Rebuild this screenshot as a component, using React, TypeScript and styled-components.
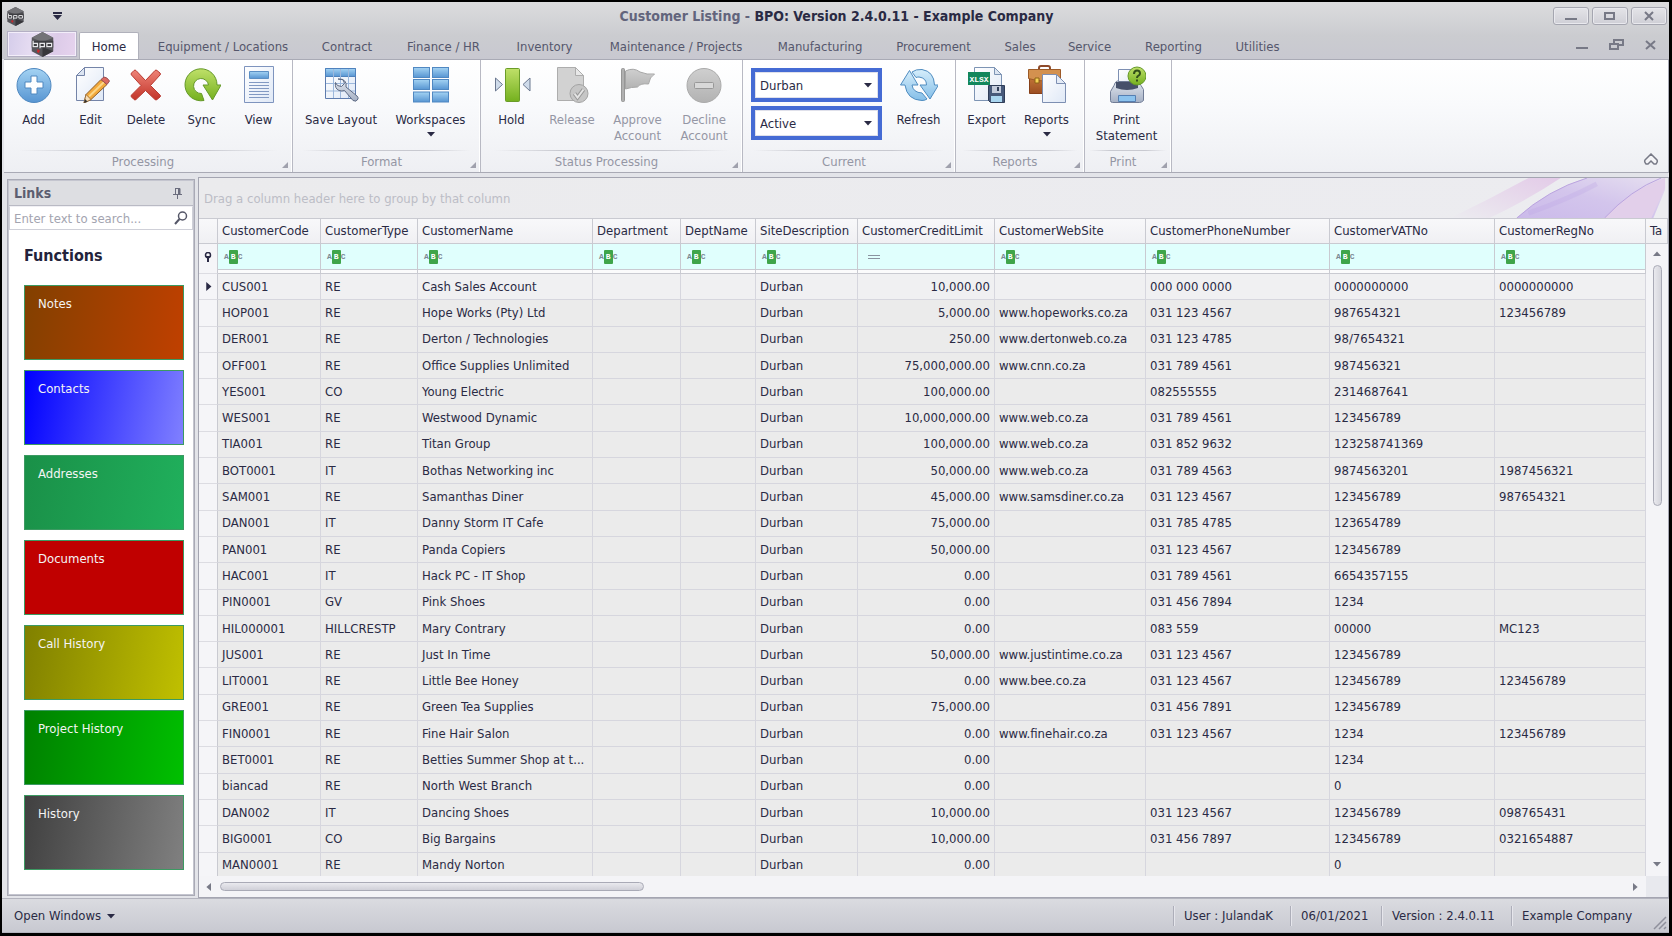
import React from 'react';
import styled, { createGlobalStyle } from 'styled-components';

const ink = '#2a2a44';
const muted = '#9496a4';
const line = '#c9cad1';

const GlobalStyle = createGlobalStyle`
  * { box-sizing: border-box; }
  html, body { margin: 0; height: 100%; }
  #root { height: 100%; }
  body, button, input, select {
    font-family: 'DejaVu Sans Condensed', 'DejaVu Sans', Tahoma, sans-serif;
    font-size: 13px;
    color: ${ink};
  }
  button { border: 0; padding: 0; background: none; }
`;

/* ---------- frame ---------- */

const Window = styled.div`
  display: flex;
  flex-direction: column;
  height: 100vh;
  min-height: 600px;
  border: 2px solid #000;
  border-right-width: 3px;
  border-bottom-width: 3px;
  background: #e3e4e9;
  overflow: hidden;
`;

const Chrome = styled.header`
  flex: none;
  background: linear-gradient(#dcdcde, #cbccd0 60%, #c8c8d0);
`;

const TitleBar = styled.div`
  display: grid;
  grid-template-columns: 120px 1fr 120px;
  align-items: center;
  height: 28px;
  padding: 0 2px 0 4px;
`;

const QuickAccess = styled.div`
  display: flex;
  align-items: center;
  gap: 28px;
  height: 28px;
`;

const Title = styled.h1`
  margin: 0;
  text-align: center;
  font-size: 14px;
  line-height: 26px;
  font-weight: bold;
  white-space: nowrap;
  span { color: #62647c; }
`;

const WindowButtons = styled.div`
  display: flex;
  justify-content: flex-end;
  gap: 3px;
`;

const WindowButton = styled.button`
  display: flex;
  align-items: center;
  justify-content: center;
  width: 36px;
  height: 18px;
  border: 1px solid #a5a6b0;
  border-radius: 3px;
  background: linear-gradient(#e4e4e8, #cfcfd6);
  box-shadow: inset 0 0 0 1px #e9e9ee;
`;

const TabRow = styled.nav`
  display: flex;
  align-items: flex-end;
  height: 29px;
  padding: 0 12px 0 6px;
`;

const AppButton = styled.button`
  display: flex;
  align-items: center;
  justify-content: center;
  width: 68px;
  height: 24px;
  margin: 0 3px 3px 0;
  border: 1px solid #f3eefa;
  background: linear-gradient(100deg, #d5cdea, #e6dcf2 35%, #dccbe8 70%, #e6d3ee);
  box-shadow: 0 0 0 1px #b4b0c4;
`;

const Tab = styled.button<{ $width: number; $active?: boolean }>`
  flex: none;
  width: ${p => p.$width}px;
  height: 27px;
  margin-right: ${p => (p.$active ? 2 : 0)}px;
  padding-top: 2px;
  line-height: 24px;
  white-space: nowrap;
  color: ${p => (p.$active ? ink : '#55576c')};
  background: ${p => (p.$active ? '#fff' : 'transparent')};
  border: solid #b0b1bb;
  border-width: ${p => (p.$active ? '1px 1px 0' : '0')};
  border-radius: 2px 2px 0 0;
`;

const ChildButtons = styled.div`
  display: flex;
  gap: 21px;
  margin-left: auto;
  height: 29px;
  align-items: center;
  button { display: flex; }
`;

/* ---------- ribbon ---------- */

const Ribbon = styled.section`
  display: flex;
  flex: none;
  height: 114px;
  margin: 0 0 0 2px;
  border: 1px solid #a9aab5;
  border-width: 1px 1px 1px 0;
  background: linear-gradient(#fff, #f9fafc 40%, #eeeff3);
`;

const Group = styled.section<{ $width: number }>`
  display: flex;
  flex-direction: column;
  flex: none;
  width: ${p => p.$width}px;
  border-right: 1px solid #b8b9c3;
  box-shadow: inset -1px 0 #fff;
`;

const GroupItems = styled.div`
  display: flex;
  flex: 1;
`;

const GroupCaption = styled.h2`
  display: flex;
  align-items: center;
  justify-content: center;
  height: 22px;
  margin: 0;
  font-size: 13px;
  font-weight: normal;
  color: ${muted};
  background: linear-gradient(90deg, transparent 5%, #c8c9d0 30%, #c8c9d0 70%, transparent 95%) top / 100% 1px no-repeat;
  span { flex: 1; text-align: center; }
  svg { align-self: flex-end; margin: 0 4px 4px 0; }
`;

const BigButton = styled.button<{ $width: number }>`
  display: flex;
  flex-direction: column;
  align-items: center;
  width: ${p => p.$width}px;
  padding: 5px 0 0 1px;
  line-height: 16px;
  white-space: nowrap;
  &:disabled { color: ${muted}; }
  > svg:first-child { margin-bottom: 9px; }
  > svg:last-child { margin-top: 2px; }
`;

const Pickers = styled.div`
  display: flex;
  flex-direction: column;
  gap: 4px;
  padding: 8px 0 0 8px;
`;

const Picker = styled.label`
  display: flex;
  align-items: center;
  width: 131px;
  height: 34px;
  padding-right: 6px;
  border: 4px solid #456bd4;
  background: #fff;
  box-shadow: inset 0 0 0 1px #dfe0ea;
  select {
    flex: 1;
    padding: 0 0 0 5px;
    border: 0;
    appearance: none;
    background: transparent;
  }
`;

const CollapseButton = styled.button`
  display: flex;
  align-self: flex-end;
  margin: 0 9px 6px auto;
`;

/* ---------- side panel ---------- */

const Workspace = styled.main`
  display: flex;
  flex: 1;
  min-height: 0;
  gap: 3px;
  padding: 4px 0 0 5px;
`;

const LinksPanel = styled.aside`
  flex: none;
  width: 188px;
  margin: 2px 0 2px;
  padding: 1px;
  border: 1px solid #a9aab5;
  outline: 1px solid #c4c5cf;
  outline-offset: -2px;
  background: #fff;
`;

const PanelHeader = styled.div`
  display: flex;
  align-items: center;
  justify-content: space-between;
  height: 25px;
  padding: 0 11px 0 5px;
  background: #dddee2;
  border-bottom: 1px solid #b9bac4;
  h2 { margin: 0; font-size: 14px; line-height: 22px; color: #5c5e70; }
`;

const Search = styled.label`
  display: flex;
  align-items: center;
  height: 24px;
  padding: 0 4px;
  border: 1px solid #cfd0d8;
  border-top-color: #f0f0f4;
  input {
    flex: 1;
    min-width: 0;
    padding: 0;
    border: 0;
    outline: 0;
    background: none;
  }
  input::placeholder { color: #a3a4b0; opacity: 1; }
`;

const FunctionsTitle = styled.h3`
  margin: 14px 0 17px 15px;
  font-size: 16px;
  line-height: 24px;
  color: #23233b;
`;

const Tiles = styled.div`
  display: flex;
  flex-direction: column;
  gap: 10px;
  padding: 0 9px 0 15px;
`;

const Tile = styled.button<{ $from: string; $to: string }>`
  height: 75px;
  padding: 10px 13px;
  display: flex;
  align-items: flex-start;
  color: #f4f4f4;
  line-height: 16px;
  border: 1px solid #3c9a62;
  background: linear-gradient(100deg, ${p => p.$from}, ${p => p.$to});
`;

/* ---------- grid ---------- */

const GridPanel = styled.section`
  display: flex;
  flex-direction: column;
  flex: 1;
  min-width: 0;
  border: 1px solid #a4a5b1;
  background: #f4f4f7;
`;

const GroupBar = styled.div`
  display: flex;
  flex: none;
  align-items: center;
  justify-content: space-between;
  height: 40px;
  padding-left: 5px;
  color: #bcbdc6;
  background: linear-gradient(90deg, #ebebed, #ececf0);
`;

const TableArea = styled.div`
  position: relative;
  flex: 1;
  min-height: 0;
  overflow: hidden;
`;

const Table = styled.table`
  width: 100%;
  height: calc(100% + 3px);
  table-layout: fixed;
  border-collapse: separate;
  border-spacing: 0;
  white-space: nowrap;
`;

const HeadCell = styled.th`
  height: 26px;
  padding: 0 0 2px 4px;
  text-align: left;
  font-weight: normal;
  overflow: hidden;
  border: solid ${line};
  border-width: 1px 1px 1px 0;
  background: linear-gradient(#f8f8fa, #f0f0f3);
`;

const FilterCell = styled.td`
  height: 30px;
  padding: 0;
  border-right: 1px solid ${line};
  border-bottom: 1px solid ${line};
  background: linear-gradient(#e0fffd 25px, ${line} 25px, ${line} 26px, #fbfbfc 26px);
`;

const FilterBox = styled.label`
  display: flex;
  align-items: center;
  height: 25px;
  margin-bottom: 4px;
  padding-left: 6px;
  input {
    flex: 1;
    min-width: 0;
    padding: 0 4px;
    border: 0;
    outline: 0;
    background: none;
  }
`;

const Abc = styled.span`
  display: flex;
  align-items: center;
  font: bold 8px/14px 'Liberation Mono', monospace;
  color: #7b8894;
  b { padding: 0 2px; color: #fff; background: #3fa54a; border-radius: 1px; }
`;

const IndicatorCell = styled.td<{ $filter?: boolean }>`
  padding: 0 0 ${p => (p.$filter ? 4 : 0)}px 0;
  border-right: 1px solid ${line};
  border-bottom: 1px solid #dcdce2;
  background: #f5f5f8;
  svg { display: block; margin: 0 auto; }
`;

const Cell = styled.td<{ $right?: boolean }>`
  padding: 0 4px;
  overflow: hidden;
  text-overflow: ellipsis;
  text-align: ${p => (p.$right ? 'right' : 'left')};
  line-height: 24px;
  border: solid #d6d6de;
  border-width: 0 1px 1px 0;
  background: #ebebeb;
  tr:first-child > & { background: #f0f0f2; }
`;

const VScroll = styled.div`
  position: absolute;
  top: 26px;
  right: 0;
  bottom: 0;
  width: 22px;
  display: flex;
  flex-direction: column;
  align-items: center;
  justify-content: space-between;
  padding: 6px 0 8px;
  background: #f4f4f7;
`;

const HScroll = styled.div`
  display: flex;
  flex: none;
  align-items: center;
  height: 21px;
  padding-left: 6px;
  background: #f4f4f7;
`;

const Thumb = styled.div<{ $vertical?: boolean }>`
  width: ${p => (p.$vertical ? '9px' : '29%')};
  height: ${p => (p.$vertical ? '39%' : '9px')};
  margin: ${p => (p.$vertical ? '7px 0 auto' : '0 auto 0 7px')};
  border: 1px solid #a9aab6;
  border-radius: 5px;
  background: ${p => (p.$vertical ? 'linear-gradient(90deg, #e9e9ee, #d5d5dc)' : 'linear-gradient(#e9e9ee, #d0d0d8)')};
`;

const Corner = styled.span`
  width: 22px;
  height: 21px;
  margin-left: 7px;
  background: #e8e9ee;
`;

/* ---------- status bar ---------- */

const StatusBar = styled.footer`
  display: flex;
  flex: none;
  align-items: center;
  height: 35px;
  padding-left: 12px;
  border: 1px solid #b3b4be;
  border-width: 1px 0;
  background: linear-gradient(#dadbe0, #c8c9d1);
`;

const OpenWindows = styled.button`
  display: flex;
  align-items: center;
  gap: 6px;
  margin-right: auto;
`;

const StatusItem = styled.span<{ $width: number }>`
  width: ${p => p.$width}px;
  padding-left: 10px;
  line-height: 20px;
  white-space: nowrap;
  border-left: 1px solid #adaeb9;
  box-shadow: inset 1px 0 #e6e6ec;
`;

/* ---------- icons ---------- */

const Arrow = ({ dir = 'down', size = 8, color = ink }: { dir?: string; size?: number; color?: string }) => {
  const turn: Record<string, number> = { down: 0, left: 90, up: 180, right: 270 };
  return (
    <svg width={size} height={size} viewBox="0 0 8 8" aria-hidden="true">
      <path d="M0 2h8L4 6.6z" fill={color} transform={`rotate(${turn[dir]} 4 4)`} />
    </svg>
  );
};

const Logo = ({ size }: { size: number }) => (
  <svg width={size} height={size} viewBox="0 0 20 20" aria-hidden="true">
    <path d="M10 0l8.6 4.6v10.8L10 20l-8.6-4.6V4.6z" fill="#55555a" />
    <path d="M10 0l8.6 4.6L10 8 1.4 4.6z" fill="#737377" />
    <path d="M10 12l8.6 3.4L10 20z" fill="#37373b" />
    <path d="M1.4 7h17.2v5.500H1.4z" fill="#3d3d41" />
    <path d="M2.500 7v4.700h3.500V9h-3.500M8 13V9h3.500v2.700H8M13.500 9h3.800v2.700h-3.800z" fill="none" stroke="#e8e8ea" />
    <path d="M6 13.500l2 1.200-1 2-1.500-.8z" fill="#c8282c" />
  </svg>
);

const Svg = ({ children }: { children: React.ReactNode }) => (
  <svg width="38" height="38" viewBox="0 0 38 38" aria-hidden="true">{children}</svg>
);

const Defs = styled.svg`
  position: absolute;
`;

const Gradients = () => (
  <Defs width="0" height="0" aria-hidden="true">
    <defs>
      <linearGradient id="blue" x1="0" y1="0" x2="0" y2="1"><stop offset="0" stopColor="#a4d3f3" /><stop offset="1" stopColor="#5795d2" /></linearGradient>
      <linearGradient id="sky" x1="0" y1="0" x2="0" y2="1"><stop offset="0" stopColor="#d6eefb" /><stop offset="1" stopColor="#84bee8" /></linearGradient>
      <linearGradient id="green" x1="0" y1="0" x2="0" y2="1"><stop offset="0" stopColor="#bfe069" /><stop offset="1" stopColor="#74b01e" /></linearGradient>
      <linearGradient id="red" x1="0" y1="0" x2="0" y2="1"><stop offset="0" stopColor="#ee8377" /><stop offset="1" stopColor="#c23429" /></linearGradient>
      <linearGradient id="grey" x1="0" y1="0" x2="0" y2="1"><stop offset="0" stopColor="#cfcfcf" /><stop offset="1" stopColor="#b2b2b2" /></linearGradient>
      <linearGradient id="paper" x1="0" y1="0" x2="1" y2="1"><stop offset="0" stopColor="#ffffff" /><stop offset="1" stopColor="#dfe8f6" /></linearGradient>
      <linearGradient id="steel" x1="0" y1="0" x2="0" y2="1"><stop offset="0" stopColor="#e3e8f0" /><stop offset="1" stopColor="#a5b0c4" /></linearGradient>
      <linearGradient id="leather" x1="0" y1="0" x2="0" y2="1"><stop offset="0" stopColor="#cf8440" /><stop offset="1" stopColor="#9c4e22" /></linearGradient>
      <linearGradient id="pink" x1="0" y1="1" x2="1" y2="0"><stop offset="0" stopColor="#ececf0" /><stop offset="1" stopColor="#e3cbe8" /></linearGradient>
      <linearGradient id="violet" x1="0" y1="1" x2="1" y2="0"><stop offset="0" stopColor="#cbbaea" /><stop offset=".5" stopColor="#d3c5ec" /><stop offset="1" stopColor="#e6dff0" /></linearGradient>
    </defs>
  </Defs>
);

const icons: Record<string, React.ReactNode> = {
  add: (
    <Svg>
      <circle cx="19" cy="20.500" r="17" fill="url(#blue)" stroke="#4f88c0" />
      <path d="M16 11h6v6h6v6h-6v6h-6v-6h-6v-6h6z" fill="#fdfeff" stroke="#4f88c0" strokeLinejoin="round" />
    </Svg>
  ),
  edit: (
    <Svg>
      <path d="M12.500 2.500h19v33h-27v-25z" fill="url(#paper)" stroke="#7484a8" />
      <path d="M12.500 2.500v8h-8z" fill="#dce5f2" stroke="#7484a8" />
      <path d="M12 38l2-8.500L29 14.500l6 5L19 34.500z" fill="#f2a93c" stroke="#8c5d28" />
      <path d="M17 31.500L32 17" stroke="#fbd687" strokeWidth="2" />
      <path d="M12 38l2-8.500 5 5z" fill="#f6deb8" stroke="#8c5d28" strokeWidth=".7" />
      <path d="M12 38l1-4 2.500 2.500z" fill="#333" />
      <path d="M29 14.500l3-2.500q3 0 5.500 4L35 19.500z" fill="#dc6a61" stroke="#9b5154" />
    </Svg>
  ),
  remove: (
    <Svg>
      <path d="M9 5.500q-1-1-2 0L4.500 8q-1 1 0 2L14 20.500 4.500 30q-1 1 0 2L7 34.500q1 1 2 0l9.500-9 9.500 9q1 1 2 0l3-2.500q1-1 0-2l-9.500-9.500L33 10q1-1 0-2l-3-2.500q-1-1-2 0l-9.500 10z" fill="url(#red)" stroke="#b93b33" strokeLinejoin="round" />
    </Svg>
  ),
  sync: (
    <Svg>
      <path d="M21 35.500A16 16 0 1 1 34 20h4l-8.500 15-9.500-15h5.500a7.500 7.500 0 1 0-7 8.500z" fill="url(#green)" stroke="#65992a" strokeLinejoin="round" />
    </Svg>
  ),
  view: (
    <Svg>
      <path d="M4.500 1.500h29v36h-29z" fill="url(#paper)" stroke="#7e94be" />
      <path d="M9.500 6.500h19v7h-19z" fill="url(#blue)" stroke="#5b8fc4" />
      <path d="M9 17.500h20M9 20.500h20M9 23.500h20M9 26.500h20M9 29.500h20M9 32.500h20" stroke="#8299c2" />
    </Svg>
  ),
  saveLayout: (
    <Svg>
      <path d="M3.500 3.500h30v30h-30z" fill="url(#paper)" stroke="#5f7cae" />
      <path d="M3.500 3.500h30v8h-30z" fill="url(#blue)" stroke="#4f82bd" />
      <path d="M11.500 4v29M18.500 4v29M26.500 4v29M4 18.500h29M4 26h29" stroke="#9db8dc" />
      <path d="M17 14l5 .5 1.500 4-3 3-4-1-2-3q-1 6 3.500 8 3 1 5.500 0l8.500 10q3.500 2 5-1.500.500-1.500-1-3L25 22q1.500-8-8-8z" transform="translate(-1)" fill="url(#steel)" stroke="#5e6a83" strokeLinejoin="round" />
    </Svg>
  ),
  workspaces: (
    <Svg>
      {[2.5, 14.5, 27].map(y => [1.5, 20.5].map(x => (
        <rect key={`${x}-${y}`} x={x} y={y} width="16" height="10" fill="url(#blue)" stroke="#5088c2" />
      )))}
    </Svg>
  ),
  hold: (
    <Svg>
      <rect x="12.500" y="3.500" width="14" height="33" rx="1" fill="url(#green)" stroke="#6a9c28" />
      <path d="M2.500 13v13l7-6.500zM37 13v13l-7-6.500z" fill="#cfdbea" stroke="#6b7890" strokeLinejoin="round" />
    </Svg>
  ),
  release: (
    <Svg>
      <path d="M4.500 2.500h18l8 8v25h-26z" fill="#d2d2d2" stroke="#adadad" />
      <path d="M22.500 2.500v8h8z" fill="#e8e8e8" stroke="#adadad" />
      <circle cx="26" cy="28.500" r="9" fill="#c6c6c6" stroke="#a3a3a3" />
      <path d="M21.500 28.500l3 4 6-8" fill="none" stroke="#999" strokeWidth="4" />
      <path d="M21.500 28.500l3 4 6-8" fill="none" stroke="#e4e4e4" strokeWidth="2" />
    </Svg>
  ),
  approve: (
    <Svg>
      <path d="M6.500 6q8-4 14.500 1 7 3 14.500 2-5 3-6 10-8-1-11 3-6 0-12 2z" fill="url(#grey)" stroke="#a6a6a6" />
      <rect x="2.500" y="3.500" width="3" height="33" rx="1" fill="#b0b0b0" stroke="#969696" />
    </Svg>
  ),
  decline: (
    <Svg>
      <circle cx="19" cy="20.500" r="17" fill="url(#grey)" stroke="#aaa" />
      <rect x="9.500" y="17.500" width="19" height="6" rx="1" fill="#d8d8d8" stroke="#989898" />
    </Svg>
  ),
  refresh: (
    <Svg>
      <g fill="url(#sky)" stroke="#4f8cc0" strokeLinejoin="round">
        <path d="M9.500 5.500L0.500 20h4.500q2 15 17 15.500 3 0 5-1.500l-5-6q-9-.5-10-8h6z" />
        <path d="M12 7q4-3 10-2.500 12 2 12.500 15.500h4L30 34l-10-14h6.500q0-7-7.500-8-2 0-3 .5z" />
      </g>
    </Svg>
  ),
  exportXlsx: (
    <Svg>
      <path d="M6.500 2.500h20l7 7v26h-27z" fill="url(#paper)" stroke="#7d94b4" />
      <path d="M26.500 2.500v7h7z" fill="#dce5f2" stroke="#7d94b4" />
      <rect x="0" y="7" width="22" height="13" fill="#13875c" />
      <text x="11" y="17" textAnchor="middle" fontFamily="Liberation Mono" fontWeight="bold" fontSize="8" fill="#fff">XLSX</text>
      <path d="M20.500 20.500h16v17h-14l-2-2z" fill="#47597a" stroke="#2f3d58" />
      <path d="M24 21h9v7h-9z" fill="#c3cbdb" /><path d="M29 22h2v4h-2z" fill="#2f3d58" />
      <path d="M23 31h11v6H23z" fill="#a9d5ef" />
    </Svg>
  ),
  reports: (
    <Svg>
      <path d="M11 5V3q0-2 2-2h7q2 0 2 2v2" fill="none" stroke="#8e4a2a" strokeWidth="2" />
      <path d="M1.500 6.500h30v22h-30z" fill="url(#leather)" stroke="#874019" />
      <path d="M.5 4.500h32v9q-16 5-32 0z" fill="#d3914f" stroke="#9c5a28" />
      <path d="M7 13h4v5H7z" fill="#f5d155" stroke="#8c6216" />
      <path d="M14.500 9.500h14l9 9v19h-23z" fill="url(#paper)" stroke="#7d8fb2" />
      <path d="M28.500 9.500v9h9z" fill="#e4ebf6" stroke="#7d8fb2" />
    </Svg>
  ),
  print: (
    <Svg>
      <path d="M10.500 4.500h20v16h-20z" fill="url(#paper)" stroke="#7d8fb2" />
      <path d="M6 20.500q2-6 5-4h16q3-2 6 4l2.500 4v11q-2 2-4 2h-27q-2 0-2-2v-9z" fill="url(#steel)" stroke="#707c96" />
      <path d="M8 17h22v6q-11 4-22 0z" fill="#46506a" />
      <path d="M10.500 30.500h17v6h-17z" fill="#8cc3ee" stroke="#557fb2" />
      <circle cx="29" cy="11" r="9" fill="url(#green)" stroke="#65992a" />
      <path d="M26 9q0-3.500 3-3.500T32 8.500q0 1.500-1.500 2.200T29 13M29 14.500v2" fill="none" stroke="#33501a" strokeWidth="2" />
    </Svg>
  ),
};

const Launcher = () => (
  <svg width="6" height="6" viewBox="0 0 6 6" aria-hidden="true"><path d="M6 0v6H0z" fill="#a0a1ad" /></svg>
);

const Swoosh = () => (
  <svg width="240" height="40" viewBox="0 0 240 41" aria-hidden="true">
    <path d="M20 41Q60 22 100 0h33Q100 22 60 41z" fill="url(#pink)" />
    <path d="M88 41Q120 12 160 0h80v12l-12 29z" fill="url(#violet)" />
    <path d="M100 36Q140 22 170 6" fill="none" stroke="#bca6e6" strokeWidth="5" opacity=".3" />
    <path d="M178 41Q205 12 240 0v10l-14 31z" fill="#e2cfea" />
    <path d="M178 41Q205 12 236 0M88 41Q120 12 160 0" fill="none" stroke="#b9a2de" />
  </svg>
);

/* ---------- data ---------- */

const tabs: [string, number][] = [
  ['Home', 60], ['Equipment / Locations', 164], ['Contract', 84], ['Finance / HR', 109], ['Inventory', 93],
  ['Maintenance / Projects', 170], ['Manufacturing', 118], ['Procurement', 109], ['Sales', 64],
  ['Service', 75], ['Reporting', 93], ['Utilities', 75],
];

const tiles: [string, string, string][] = [
  ['Notes', '#824000', '#c04000'],
  ['Contacts', '#0000ff', '#8080ff'],
  ['Addresses', '#1a9048', '#20b05c'],
  ['Documents', '#c00000', '#c00000'],
  ['Call History', '#808000', '#c0c000'],
  ['Project History', '#008000', '#00c000'],
  ['History', '#404040', '#808080'],
];

const columns: [string, number | undefined][] = [
  ['CustomerCode', 103], ['CustomerType', 97], ['CustomerName', 175], ['Department', 88], ['DeptName', 75],
  ['SiteDescription', 102], ['CustomerCreditLimit', 137], ['CustomerWebSite', 151], ['CustomerPhoneNumber', 184],
  ['CustomerVATNo', 165], ['CustomerRegNo', 151], ['Ta', undefined],
];

// code, type, name, credit limit, web site, phone, VAT number, registration number
const customers = `CUS001|RE|Cash Sales Account|10,000.00||000 000 0000|0000000000|0000000000
HOP001|RE|Hope Works (Pty) Ltd|5,000.00|www.hopeworks.co.za|031 123 4567|987654321|123456789
DER001|RE|Derton / Technologies|250.00|www.dertonweb.co.za|031 123 4785|98/7654321|
OFF001|RE|Office Supplies Unlimited|75,000,000.00|www.cnn.co.za|031 789 4561|987456321|
YES001|CO|Young Electric|100,000.00||082555555|2314687641|
WES001|RE|Westwood Dynamic|10,000,000.00|www.web.co.za|031 789 4561|123456789|
TIA001|RE|Titan Group|100,000.00|www.web.co.za|031 852 9632|123258741369|
BOT0001|IT|Bothas Networking inc|50,000.00|www.web.co.za|031 789 4563|9874563201|1987456321
SAM001|RE|Samanthas Diner|45,000.00|www.samsdiner.co.za|031 123 4567|123456789|987654321
DAN001|IT|Danny Storm IT Cafe|75,000.00||031 785 4785|123654789|
PAN001|RE|Panda Copiers|50,000.00||031 123 4567|123456789|
HAC001|IT|Hack PC - IT Shop|0.00||031 789 4561|6654357155|
PIN0001|GV|Pink Shoes|0.00||031 456 7894|1234|
HIL000001|HILLCRESTP|Mary Contrary|0.00||083 559|00000|MC123
JUS001|RE|Just In Time|50,000.00|www.justintime.co.za|031 123 4567|123456789|
LIT0001|RE|Little Bee Honey|0.00|www.bee.co.za|031 123 4567|123456789|123456789
GRE001|RE|Green Tea Supplies|75,000.00||031 456 7891|123456789|
FIN0001|RE|Fine Hair Salon|0.00|www.finehair.co.za|031 123 4567|1234|123456789
BET0001|RE|Betties Summer Shop at t...|0.00|||1234|
biancad|RE|North West Branch|0.00|||0|
DAN002|IT|Dancing Shoes|10,000.00||031 123 4567|123456789|098765431
BIG0001|CO|Big Bargains|10,000.00||031 456 7897|123456789|0321654887
MAN0001|RE|Mandy Norton|0.00|||0|`.split('\n').map(row => row.split('|'));

interface RibbonButtonProps { icon: string; label: string; width: number; menu?: boolean; disabled?: boolean }

const RibbonButton = ({ icon, label, width, menu, disabled }: RibbonButtonProps) => (
  <BigButton $width={width} disabled={disabled}>
    {icons[icon]}
    {label.split('\n').map(text => <span key={text}>{text}</span>)}
    {menu && <Arrow />}
  </BigButton>
);

const RibbonGroup = ({ name, width, children }: { name: string; width: number; children: React.ReactNode }) => (
  <Group $width={width}>
    <GroupItems>{children}</GroupItems>
    <GroupCaption><span>{name}</span><Launcher /></GroupCaption>
  </Group>
);

const glyph = { fill: 'none', stroke: '#777986', strokeWidth: 2 };

const filterGlyph = (name: string) => (name === 'CustomerCreditLimit'
  ? <svg width="20" height="6" viewBox="0 0 20 6"><path d="M4 1.500h12M4 4.500h12" stroke="#8a93a0" /></svg>
  : <Abc>A<b>B</b>C</Abc>);

export default function App() {
  return (
    <Window>
      <GlobalStyle />
      <Gradients />
      <Chrome>
        <TitleBar>
          <QuickAccess>
            <Logo size={19} />
            <svg width="9" height="8" viewBox="0 0 9 8" aria-hidden="true"><path d="M0 0h9v2H0zM0 3h9L4.500 8z" fill={ink} /></svg>
          </QuickAccess>
          <Title><span>Customer Listing - </span>BPO: Version 2.4.0.11 - Example Company</Title>
          <WindowButtons>
            <WindowButton aria-label="Minimize"><svg width="12" height="10"><path d="M0 8h12" {...glyph} /></svg></WindowButton>
            <WindowButton aria-label="Maximize"><svg width="12" height="10"><path d="M1 2h9v6H1z" {...glyph} /></svg></WindowButton>
            <WindowButton aria-label="Close"><svg width="12" height="10"><path d="M2 1l8 8M10 1L2 9" {...glyph} /></svg></WindowButton>
          </WindowButtons>
        </TitleBar>
        <TabRow>
          <AppButton aria-label="Application menu"><Logo size={25} /></AppButton>
          {tabs.map(([name, width], i) => <Tab key={name} $width={width} $active={i === 0}>{name}</Tab>)}
          <ChildButtons>
            <button aria-label="Minimize child"><svg width="12" height="12"><path d="M0 9h12" {...glyph} /></svg></button>
            <button aria-label="Restore child"><svg width="15" height="12"><path d="M5 4V1h9v5h-4M1 5h8v5H1z" {...glyph} /></svg></button>
            <button aria-label="Close child"><svg width="12" height="12"><path d="M1 2l9 8M10 2l-9 8" {...glyph} /></svg></button>
          </ChildButtons>
        </TabRow>
      </Chrome>

      <Ribbon>
        <RibbonGroup name="Processing" width={289}>
          <RibbonButton icon="add" label="Add" width={58} />
          <RibbonButton icon="edit" label="Edit" width={56} />
          <RibbonButton icon="remove" label="Delete" width={55} />
          <RibbonButton icon="sync" label="Sync" width={56} />
          <RibbonButton icon="view" label="View" width={58} />
        </RibbonGroup>
        <RibbonGroup name="Format" width={188}>
          <RibbonButton icon="saveLayout" label="Save Layout" width={95} />
          <RibbonButton icon="workspaces" label="Workspaces" width={84} menu />
        </RibbonGroup>
        <RibbonGroup name="Status Processing" width={262}>
          <RibbonButton icon="hold" label="Hold" width={60} />
          <RibbonButton icon="release" label="Release" width={61} disabled />
          <RibbonButton icon="approve" label={'Approve\nAccount'} width={70} disabled />
          <RibbonButton icon="decline" label={'Decline\nAccount'} width={63} disabled />
        </RibbonGroup>
        <RibbonGroup name="Current" width={213}>
          <Pickers>
            <Picker>
              <select aria-label="Site" defaultValue="Durban"><option>Durban</option></select>
              <Arrow />
            </Picker>
            <Picker>
              <select aria-label="Status" defaultValue="Active"><option>Active</option></select>
              <Arrow />
            </Picker>
          </Pickers>
          <RibbonButton icon="refresh" label="Refresh" width={72} />
        </RibbonGroup>
        <RibbonGroup name="Reports" width={129}>
          <RibbonButton icon="exportXlsx" label="Export" width={60} />
          <RibbonButton icon="reports" label="Reports" width={60} menu />
        </RibbonGroup>
        <RibbonGroup name="Print" width={87}>
          <RibbonButton icon="print" label={'Print\nStatement'} width={82} />
        </RibbonGroup>
        <CollapseButton aria-label="Collapse ribbon">
          <svg width="16" height="13" viewBox="0 0 16 13"><path d="M2 7l6-6 6 6q1 2-1 4h-2L8 8l-3 3H3q-2-2-1-4z" fill="#f4f4f7" stroke="#777986" strokeWidth="1.500" /></svg>
        </CollapseButton>
      </Ribbon>

      <Workspace>
        <LinksPanel>
          <PanelHeader>
            <h2>Links</h2>
            <svg width="9" height="11" viewBox="0 0 9 11" aria-hidden="true"><path d="M2 .5h5v6M2.500 0v6M0 6.500h9M4.500 7v4" fill="none" stroke="#6a6c7d" /><path d="M5 1h2v5H5z" fill="#6a6c7d" /></svg>
          </PanelHeader>
          <Search>
            <input type="text" placeholder="Enter text to search..." aria-label="Search links" />
            <svg width="14" height="14" viewBox="0 0 14 14" aria-hidden="true"><circle cx="8.500" cy="5" r="4" fill="none" stroke="#555768" strokeWidth="1.500" /><path d="M5.500 8L1 13" stroke="#555768" strokeWidth="2" /></svg>
          </Search>
          <FunctionsTitle>Functions</FunctionsTitle>
          <Tiles>
            {tiles.map(([name, from, to]) => <Tile key={name} $from={from} $to={to}>{name}</Tile>)}
          </Tiles>
        </LinksPanel>

        <GridPanel>
          <GroupBar>
            <span>Drag a column header here to group by that column</span>
            <Swoosh />
          </GroupBar>
          <TableArea>
            <Table>
              <colgroup>
                <col width={19} />
                {columns.map(([name, width]) => <col key={name} width={width} />)}
              </colgroup>
              <thead>
                <tr>
                  <HeadCell />
                  {columns.map(([name]) => <HeadCell key={name} scope="col">{name}</HeadCell>)}
                </tr>
                <tr>
                  <IndicatorCell $filter>
                    <svg width="8" height="10" viewBox="0 0 8 10"><circle cx="4" cy="3" r="2.500" fill="none" stroke={ink} strokeWidth="1.500" /><path d="M1 4h6L5 6.500V10H3V6.500z" fill={ink} /></svg>
                  </IndicatorCell>
                  {columns.map(([name, width]) => (
                    <FilterCell key={name}>
                      {width && (
                        <FilterBox>
                          {filterGlyph(name)}
                          <input type="text" aria-label={`Filter ${name}`} />
                        </FilterBox>
                      )}
                    </FilterCell>
                  ))}
                </tr>
              </thead>
              <tbody>
                {customers.map(([code, type, name, credit, web, phone, vat, reg], i) => (
                  <tr key={code}>
                    <IndicatorCell>{i === 0 && <Arrow dir="right" size={9} />}</IndicatorCell>
                    <Cell>{code}</Cell>
                    <Cell>{type}</Cell>
                    <Cell>{name}</Cell>
                    <Cell />
                    <Cell />
                    <Cell>Durban</Cell>
                    <Cell $right>{credit}</Cell>
                    <Cell>{web}</Cell>
                    <Cell>{phone}</Cell>
                    <Cell>{vat}</Cell>
                    <Cell>{reg}</Cell>
                    <Cell />
                  </tr>
                ))}
              </tbody>
            </Table>
            <VScroll>
              <Arrow dir="up" color="#777986" />
              <Thumb $vertical />
              <Arrow color="#777986" />
            </VScroll>
          </TableArea>
          <HScroll>
            <Arrow dir="left" color="#777986" />
            <Thumb />
            <Arrow dir="right" color="#777986" />
            <Corner />
          </HScroll>
        </GridPanel>
      </Workspace>

      <StatusBar>
        <OpenWindows>Open Windows <Arrow /></OpenWindows>
        <StatusItem $width={117}>User : JulandaK</StatusItem>
        <StatusItem $width={91}>06/01/2021</StatusItem>
        <StatusItem $width={130}>Version : 2.4.0.11</StatusItem>
        <StatusItem $width={142}>Example Company</StatusItem>
        <svg width="16" height="30" viewBox="0 0 16 30" aria-hidden="true"><path d="M1 28L13 16M6 28l7-7M11 28l2-2" stroke="#8f909c" strokeWidth="1.500" /></svg>
      </StatusBar>
    </Window>
  );
}
